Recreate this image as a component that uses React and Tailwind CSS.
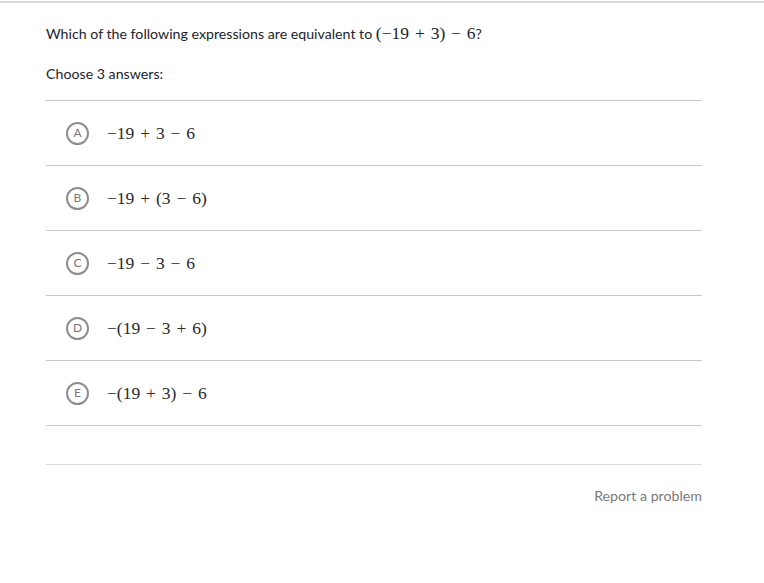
const choices = [
  { letter: "A", expr: "−19 + 3 − 6" },
  { letter: "B", expr: "−19 + (3 − 6)" },
  { letter: "C", expr: "−19 − 3 − 6" },
  { letter: "D", expr: "−(19 − 3 + 6)" },
  { letter: "E", expr: "−(19 + 3) − 6" },
];

const mathFont = { fontFamily: '"Liberation Serif", "DejaVu Serif", serif' };

function Math({ children, className = "" }) {
  return (
    <span className={`font-['Liberation_Serif',serif] [word-spacing:1.5px] ${className}`} style={mathFont}>
      {children}
    </span>
  );
}

export default function App() {
  return (
    <div className="w-[764px] h-[583px] bg-white font-['Lato',sans-serif] text-[#21242c]">
      <div className="h-[2px] mt-px bg-[#dcdcdc]" />
      <div className="px-[46px] w-[702px] box-content pr-0">
        <p className="mt-[20px] text-[14.2px] leading-[20px]">
          Which of the following expressions are equivalent to{" "}
          <Math className="text-[17.5px]">(−19 + 3) − 6</Math>?
        </p>
        <p className="mt-[20px] text-[14.2px] leading-[20px]">Choose 3 answers:</p>

        <div className="mt-[16px] w-[656px] border-t border-[#c8c8c8]">
          {choices.map((c) => (
            <div
              key={c.letter}
              className="h-[65px] border-b border-[#c8c8c8] flex items-center pl-[20px]"
            >
              <span className="w-[23px] h-[23px] rounded-full border-2 border-[#8e8e8e] flex items-center justify-center text-[12px] text-[#777] leading-none">
                {c.letter}
              </span>
              <Math className="ml-[18px] text-[17.5px] text-[#2a2a2a]">{c.expr}</Math>
            </div>
          ))}
        </div>

        <div className="mt-[38px] w-[656px] border-t border-[#dadada]" />
        <div className="w-[656px] flex justify-end mt-[20px]">
          <span className="text-[14.2px] text-[#7a7a7a]">Report a problem</span>
        </div>
      </div>
    </div>
  );
}
